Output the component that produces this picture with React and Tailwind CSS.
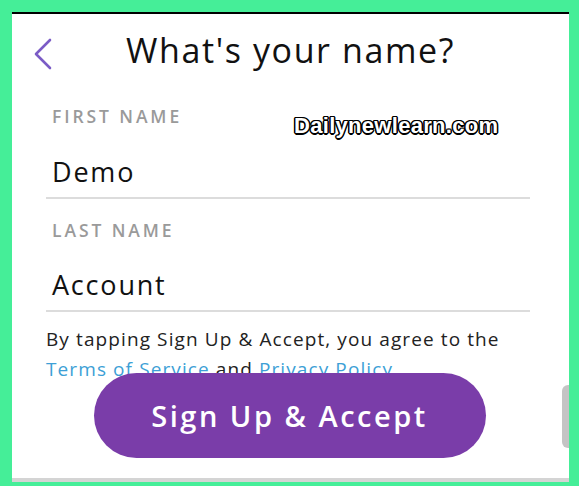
import React from "react";

const font = { fontFamily: "'Open Sans', Lato, sans-serif" };

const Field = ({ label, value }) => (
  <div className="flex flex-col">
    <span className="pl-[6px] text-[17.5px] tracking-[2.9px] text-[#9a9a9a] font-semibold leading-none">
      {label}
    </span>
    <span className="pl-[6px] mt-[32px] text-[27px] tracking-[1.8px] text-[#111] leading-none">
      {value}
    </span>
    <div className="mt-[12px] h-[2px] bg-[#dcdcdc]"></div>
  </div>
);

export default function App() {
  return (
    <div
      className="relative w-[579px] h-[486px] bg-[#45ee98] pt-[12px] pl-[12px] pr-[10px] pb-[4px]"
      style={font}
    >
      <div className="relative flex flex-col h-full bg-white border-t-2 border-black border-b-4 border-b-[#d4d4d4] overflow-hidden">
        {/* Header */}
        <div className="relative flex items-center justify-center h-[56px] mt-[4px]">
          <button className="absolute left-[21px] top-[20px]">
            <svg width="20" height="32" viewBox="0 0 20 32" fill="none">
              <path
                d="M17 2 L3 16 L17 30"
                stroke="#7b5cc6"
                strokeWidth="2.6"
                strokeLinecap="round"
                strokeLinejoin="round"
              />
            </svg>
          </button>
          <h1 className="text-[34px] text-[#111] pt-[8px] tracking-[1.6px]">What's your name?</h1>
        </div>

        {/* Form */}
        <div className="flex flex-col gap-[23px] pl-[34px] pr-[39px] mt-[34px]">
          <Field label="FIRST NAME" value="Demo" />
          <Field label="LAST NAME" value="Account" />
        </div>

        <p className="pl-[34px] pr-[10px] mt-[12px] text-[19px] tracking-[1.1px] leading-[30px] text-[#222]">
          By tapping Sign Up &amp; Accept, you agree to the
          <br />
          <span className="text-[#3d9fd6]">Terms of Service</span> and{" "}
          <span className="text-[#3d9fd6]">Privacy Policy</span>
        </p>

        <div className="relative flex justify-center mt-[-11px] pr-[2px]">
          <button className="w-[392px] h-[85px] rounded-full bg-[#7a3da9] text-white text-[29px] font-semibold tracking-[2.5px]">
            Sign Up &amp; Accept
          </button>
        </div>

        {/* side handle */}
        <div className="absolute right-0 top-[371px] w-[7px] h-[63px] rounded-l-[6px] bg-[#c4c4c4]"></div>
      </div>

      {/* watermark */}
      <div className="absolute left-[294px] top-[109px] text-[22px] font-bold text-white tracking-[0.3px] [font-family:'Liberation_Sans',sans-serif] [text-shadow:-1.5px_0_0_#000,1.5px_0_0_#000,0_-1.5px_0_#000,0_1.5px_0_#000,-1px_-1px_0_#000,1px_1px_0_#000,-1px_1px_0_#000,1px_-1px_0_#000]">
        Dailynewlearn.com
      </div>
    </div>
  );
}
